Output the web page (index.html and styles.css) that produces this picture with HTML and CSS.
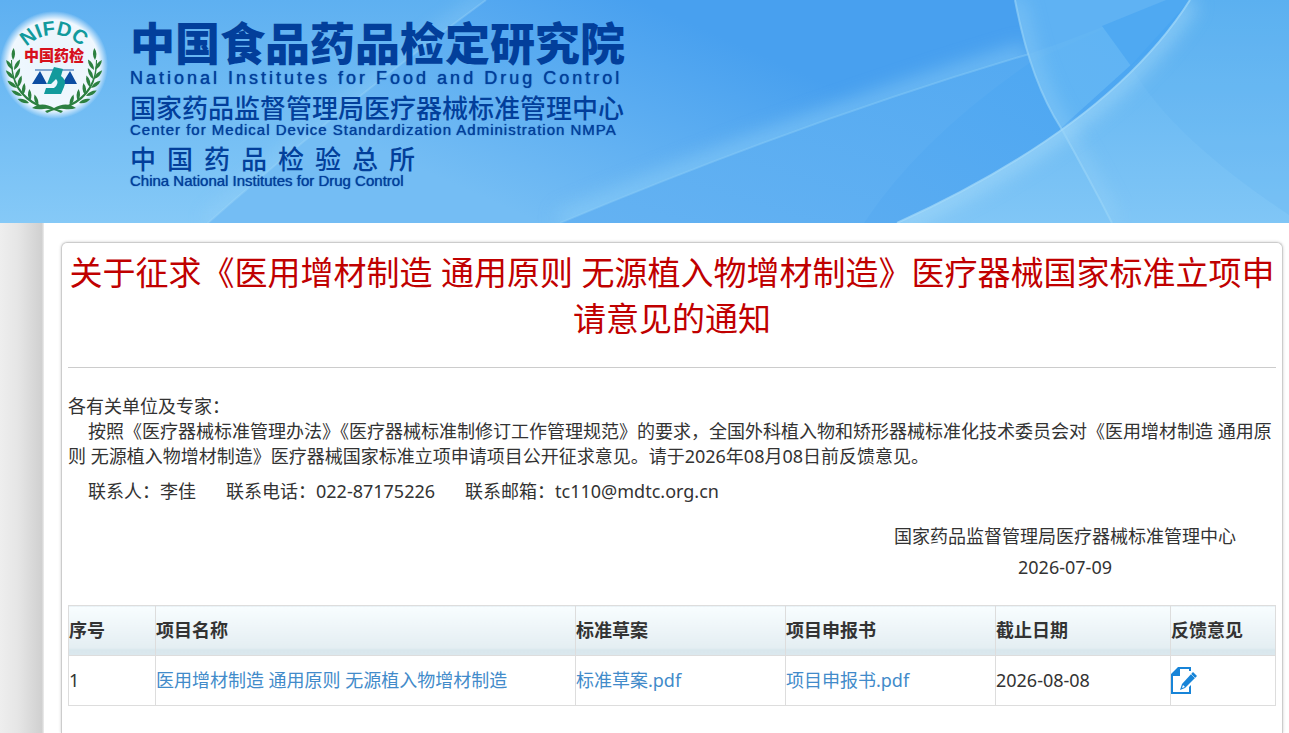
FILE: index.html
```html
<!doctype html>
<html lang="zh-CN">
<head>
    <meta charset="UTF-8">
    <meta name="viewport" content="width=device-width, initial-scale=1.0">
    <title>中国食品药品检定研究院</title>
    <link rel="stylesheet" href="styles.css">
</head>
<body>
    <!-- 页头 -->
    <header class="banner">
        <svg class="banner-bg" viewBox="0 0 1289 223" preserveAspectRatio="none" aria-hidden="true">
            <defs>
                <linearGradient id="gBase" x1="0" y1="0" x2="0" y2="1">
                    <stop offset="0" stop-color="#5eb0f1"/>
                    <stop offset="1" stop-color="#85c9f7"/>
                </linearGradient>
                <linearGradient id="gMid" gradientUnits="userSpaceOnUse" x1="640" y1="0" x2="540" y2="223">
                    <stop offset="0" stop-color="#48a0ef"/>
                    <stop offset="1" stop-color="#74bdf4"/>
                </linearGradient>
                <linearGradient id="gLow" x1="1" y1="0" x2="0" y2="1">
                    <stop offset="0" stop-color="#4da6f1"/>
                    <stop offset="1" stop-color="#64b2f2"/>
                </linearGradient>
                <linearGradient id="gLeaf" x1="1" y1="0" x2="0" y2="1">
                    <stop offset="0" stop-color="#48a5f2"/>
                    <stop offset="1" stop-color="#5aacf1"/>
                </linearGradient>
                <linearGradient id="gRight" x1="0" y1="0" x2="0" y2="1">
                    <stop offset="0" stop-color="#5cb1f1"/>
                    <stop offset="1" stop-color="#80c6f6"/>
                </linearGradient>
                <filter id="soft" x="-20%" y="-20%" width="140%" height="140%">
                    <feGaussianBlur stdDeviation="10"/>
                </filter>
                <clipPath id="cLeft"><path d="M0 0H486Q330 115 208 223H0Z"/></clipPath>
                <clipPath id="cTop"><path d="M486 0H1015Q1020 30 1029 54Q806 120 560 223H208Q330 115 486 0Z"/></clipPath>
                <clipPath id="cRight"><path d="M1015 0Q1030 80 1061 128Q1090 180 1112 223H1289V0Z"/></clipPath>
                <clipPath id="cArc"><path d="M897 223Q1110 126 1190 0H1289V223Z"/></clipPath>
            </defs>
            <rect width="1289" height="223" fill="url(#gBase)"/>
            <path d="M486 0H1289V223H208Q330 115 486 0Z" fill="url(#gMid)"/>
            <path d="M560 223Q806 120 1029 54Q1100 30 1166 0H1289V223Z" fill="url(#gLow)"/>
            <path d="M864 223Q920 138 1031 62L1166 0H1200V223Z" fill="url(#gLeaf)"/>
            <g clip-path="url(#cLeft)">
                <path d="M486 0Q330 115 208 223" fill="none" stroke="#a5dafa" stroke-width="12" opacity="0.4" filter="url(#soft)"/>
            </g>
            <g clip-path="url(#cTop)">
                <path d="M1029 54Q806 120 560 223" fill="none" stroke="#8fd0f8" stroke-width="20" opacity="0.6" filter="url(#soft)"/>
            </g>
            <path d="M486 0Q330 115 208 223" fill="none" stroke="#a5dafa" stroke-width="2" opacity="0.3"/>
            <path d="M1029 54Q806 120 560 223" fill="none" stroke="#8fd0f8" stroke-width="2" opacity="0.4"/>
            <!-- 右侧光弧 -->
            <path d="M1015 0Q1030 80 1061 128L1133 63L1190 0Z" fill="#6cbcf4" opacity="0.65"/>
            <path d="M1102 26L1166 0H1190Q1170 36 1131 66Z" fill="#4aa5f1" opacity="0.75"/>
            <path d="M897 223Q1110 126 1190 0H1289V223Z" fill="url(#gRight)"/>
            <path d="M1131 66Q1170 136 1289 215V0H1190Q1170 36 1131 66Z" fill="#5cb0f2" opacity="0.2"/>
            <g clip-path="url(#cRight)">
                <path d="M1015 0Q1030 80 1061 128Q1090 180 1112 223" fill="none" stroke="#9fd7f9" stroke-width="14" opacity="0.5" filter="url(#soft)"/>
            </g>
            <g clip-path="url(#cArc)">
                <path d="M897 223Q1110 126 1190 0" fill="none" stroke="#b4e2fb" stroke-width="16" opacity="0.6" filter="url(#soft)"/>
            </g>
            <path d="M1015 0Q1030 80 1061 128Q1090 180 1112 223" fill="none" stroke="#9bd5f9" stroke-width="2" opacity="0.6"/>
            <path d="M897 223Q1110 126 1190 0" fill="none" stroke="#a4dafa" stroke-width="2" opacity="0.7"/>
        </svg>

        <svg class="emblem" viewBox="0 0 112 124" role="img" aria-label="NIFDC 中国药检">
            <defs>
                <radialGradient id="halo">
                    <stop offset="0" stop-color="#fff" stop-opacity="0.85"/>
                    <stop offset="0.84" stop-color="#fff" stop-opacity="0.9"/>
                    <stop offset="1" stop-color="#fff" stop-opacity="0"/>
                </radialGradient>
                <path id="arc" d="M18 70A36 35 0 0 1 90 70"/>
                <path id="leaf" d="M0 0Q-4 -6 -1 -12Q3 -6 0 0Z"/>
                <g id="branch" fill="#2c8040">
                    <use href="#leaf" transform="translate(13 60) rotate(8)"/>
                    <use href="#leaf" transform="translate(13 70) rotate(-30)"/>
                    <use href="#leaf" transform="translate(14 70) rotate(35)"/>
                    <use href="#leaf" transform="translate(14 79) rotate(-38)"/>
                    <use href="#leaf" transform="translate(15 79) rotate(30)"/>
                    <use href="#leaf" transform="translate(17 88) rotate(-48)"/>
                    <use href="#leaf" transform="translate(18 87) rotate(22)"/>
                    <use href="#leaf" transform="translate(22 96) rotate(-58)"/>
                    <use href="#leaf" transform="translate(23 95) rotate(12)"/>
                    <use href="#leaf" transform="translate(29 103) rotate(-66)"/>
                    <use href="#leaf" transform="translate(30 101) rotate(2)"/>
                    <use href="#leaf" transform="translate(38 106) rotate(-12)"/>
                    <path d="M12 60Q12 92 40 105L39 107Q10 94 11 60Z"/>
                    <path d="M32 108Q42 101 54 108L63 111L61 113Q50 108 44 109Q37 110 32 108Z"/>
                </g>
            </defs>
            <circle cx="54" cy="65" r="54" fill="url(#halo)"/>
            <use href="#branch"/>
            <use href="#branch" transform="matrix(-1 0 0 1 108 0)"/>
            <text class="emblem-latin"><textPath href="#arc" startOffset="50%">NIFDC</textPath></text>
            <text class="emblem-name" x="54" y="61">中国药检</text>
            <path d="M35 70H74" stroke="#1b5aa5" stroke-width="1"/>
            <path d="M40 71L47 84H32ZM70 71L77 84H62Z" fill="#0c4da2"/>
            <path d="M54 67L63 69L61 76Q67 80 64 87L61 94H44L46 88H54Q60 83 56 79L51 84H47L51 74Z" fill="#129a9c"/>
        </svg>

        <div class="org">
            <h1 class="org-main">中国食品药品检定研究院</h1>
            <p class="org-main-en">National Institutes for Food and Drug Control</p>
            <p class="org-sub">国家药品监督管理局医疗器械标准管理中心</p>
            <p class="org-sub-en">Center for Medical Device Standardization Administration NMPA</p>
            <p class="org-sub org-wide">中国药品检验总所</p>
            <p class="org-last-en">China National Institutes for Drug Control</p>
        </div>
    </header>

    <div class="page">
        <aside class="side"></aside>

        <!-- 通知正文 -->
        <main class="panel">
            <h2 class="title">关于征求《医用增材制造 通用原则 无源植入物增材制造》医疗器械国家标准立项申请意见的通知</h2>

            <div class="notice">
                <p>各有关单位及专家：</p>
                <p class="indent">按照《医疗器械标准管理办法》《医疗器械标准制修订工作管理规范》的要求，全国外科植入物和矫形器械标准化技术委员会对《医用增材制造 通用原则 无源植入物增材制造》医疗器械国家标准立项申请项目公开征求意见。请于2026年08月08日前反馈意见。</p>
            </div>

            <div class="contact">
                <span>联系人：李佳</span>
                <span>联系电话：022-87175226</span>
                <span>联系邮箱：tc110@mdtc.org.cn</span>
            </div>

            <div class="sign">
                <p>国家药品监督管理局医疗器械标准管理中心</p>
                <p>2026-07-09</p>
            </div>

            <table class="list">
                <thead>
                    <tr>
                        <th class="col-no">序号</th>
                        <th class="col-name">项目名称</th>
                        <th class="col-file">标准草案</th>
                        <th class="col-file">项目申报书</th>
                        <th class="col-date">截止日期</th>
                        <th>反馈意见</th>
                    </tr>
                </thead>
                <tbody>
                    <tr>
                        <td>1</td>
                        <td><a href="#">医用增材制造 通用原则 无源植入物增材制造</a></td>
                        <td><a href="#">标准草案.pdf</a></td>
                        <td><a href="#">项目申报书.pdf</a></td>
                        <td>2026-08-08</td>
                        <td>
                            <a class="edit" href="#" aria-label="反馈意见">
                                <svg viewBox="0 0 26 28" width="26" height="28" aria-hidden="true">
                                    <path d="M7 0H20V4H18V2H9V9H2V25H18V20L20 18V27H0V7Z" fill="#1784d8"/>
                                    <path d="M22 5L26 9L14 21L9 23L11 17Z" fill="#1784d8"/>
                                    <path d="M12 18L14 20L11 21Z" fill="#fff"/>
                                    <path d="M20 7L24 11" stroke="#fff" stroke-width="0.6"/>
                                </svg>
                            </a>
                        </td>
                    </tr>
                </tbody>
            </table>
        </main>
    </div>
</body>
</html>
```

FILE: styles.css
```css
* {
    box-sizing: border-box;
}

body {
    margin: 0;
    min-height: 100vh;
    display: flex;
    flex-direction: column;
    background: #fff;
    color: #333;
    font-family: "Noto Sans", "Noto Sans CJK SC", sans-serif;
    font-size: 18px;
    line-height: 25px;
}

h1, h2, p {
    margin: 0;
}

a {
    color: #428bca;
    text-decoration: none;
}

/* 页头 */
.banner {
    position: relative;
    display: flex;
    align-items: flex-start;
    gap: 18px;
    padding-bottom: 34px;
    background: #6cb8f3;
    color: #023f9b;
    overflow: hidden;
}

.banner-bg {
    position: absolute;
    inset: 0;
    width: 100%;
    height: 100%;
}

.emblem {
    position: relative;
    width: 112px;
    height: 124px;
    flex-shrink: 0;
}

.emblem-latin {
    fill: #129a9c;
    font: bold 20px "Liberation Sans", sans-serif;
    text-anchor: middle;
}

.emblem-name {
    fill: #d7101c;
    font: 900 15px "Noto Sans CJK SC", sans-serif;
    text-anchor: middle;
}

.org {
    position: relative;
    padding-top: 23px;
    white-space: nowrap;
    font-family: "Liberation Sans", "Noto Sans CJK SC", sans-serif;
}

.org-main {
    font-size: 45px;
    font-weight: 900;
    line-height: 46px;
}

.org-main-en {
    font-size: 18px;
    line-height: 18px;
    letter-spacing: 3px;
    text-shadow: 0 0 1px #023f9b;
}

.org-sub {
    margin-top: 9px;
    font-size: 26px;
    font-weight: 500;
    line-height: 26px;
}

.org-wide {
    letter-spacing: 11px;
}

.org-sub-en,
.org-last-en {
    font-size: 15px;
    line-height: 16px;
    text-shadow: 0 0 1px #023f9b;
}

.org-sub-en {
    letter-spacing: 1px;
}

/* 主体 */
.page {
    flex: 1;
    display: flex;
}

.side {
    width: 44px;
    flex-shrink: 0;
    background: linear-gradient(to right, #eee, #e6e6e6 40%, #d0d0d0 95%, #eee);
}

.panel {
    flex: 1;
    margin: 19px 6px 0 17px;
    padding: 7px 6px 27px;
    border: 1px solid #ccc;
    border-bottom: 0;
    border-radius: 6px 6px 0 0;
    box-shadow: 0 0 3px #ccc;
}

.title {
    padding-bottom: 25px;
    border-bottom: 1px solid #ccc;
    color: #c00000;
    font-size: 33px;
    font-weight: 400;
    line-height: 46px;
    text-align: center;
}

.notice {
    margin-top: 26px;
}

.indent {
    text-indent: 20px;
}

.contact {
    display: flex;
    gap: 30px;
    margin-top: 10px;
    padding-left: 20px;
}

.sign {
    width: fit-content;
    margin: 20px 40px 25px auto;
    display: grid;
    gap: 6px;
    text-align: center;
}

/* 项目列表 */
.list {
    width: 100%;
    table-layout: fixed;
    border-collapse: collapse;
}

.list th,
.list td {
    height: 50px;
    padding: 0;
    border: 1px solid #ddd;
    text-align: left;
}

.list th {
    background: linear-gradient(#f8fdff, #e4eef2 85%, #d9e7ed 88%, #dce8ee);
}

.col-no {
    width: 7.2%;
}

.col-name {
    width: 34.8%;
}

.col-file {
    width: 17.4%;
}

.col-date {
    width: 14.5%;
}

.edit svg {
    display: block;
}
```
